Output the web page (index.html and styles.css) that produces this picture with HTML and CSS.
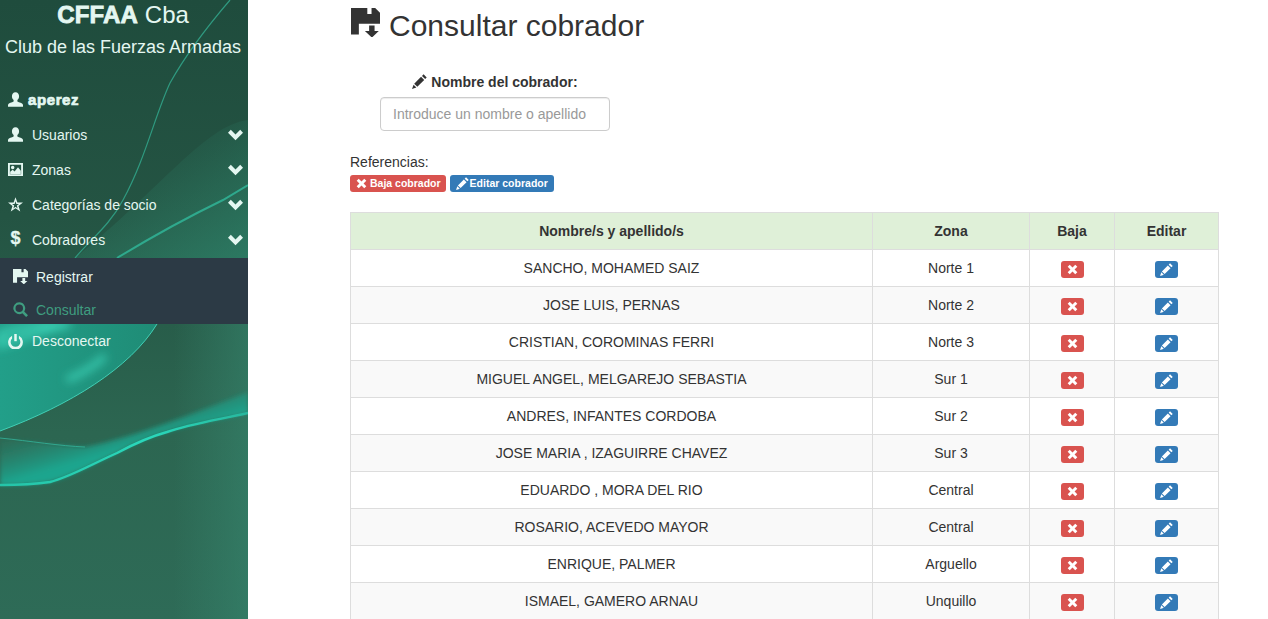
FILE: index.html
```html
<!DOCTYPE html>
<html lang="en">
<head>
  <meta charset="UTF-8" />
  <title>Consultar cobrador</title>
  <link rel="stylesheet" href="styles.css">
</head>
<body>
  <svg class="icon-defs" xmlns="http://www.w3.org/2000/svg">
    <symbol id="i-user" viewBox="0 0 24 24"><path d="M12 .5C8.300.5 6.300 3.300 6.300 6.800c0 2.600 1 4.700 2.700 6v2.400c-2.800 1.500-8 2.500-9 5v3.300h24v-3.300c-1-2.500-6.200-3.500-9-5v-2.400c1.700-1.300 2.700-3.400 2.700-6C17.700 3.300 15.700.5 12 .5z"/></symbol>
    <symbol id="i-picture" viewBox="0 0 24 24"><path fill-rule="evenodd" d="M0 1.500h24v21H0zM3 4.500v15h18v-15zM7.500 6a2.800 2.800 0 1 1 0 5.600 2.800 2.800 0 0 1 0-5.600zM3.500 19v-3.500l4-3 3 2.500 5.500-6.500 4.500 5.500V19z"/></symbol>
    <symbol id="i-star" viewBox="0 0 24 24"><path fill-rule="evenodd" d="M12 .5l3 8.300h9l-7.200 5.500 2.800 9L12 18l-7.600 5.300 2.800-9L0 8.800h9zM12 6.800l-1.400 4.400H6.500l3.400 2.500-1.300 4.500 3.400-2.500 3.400 2.500-1.300-4.500 3.400-2.500h-4.100z"/></symbol>
    <symbol id="i-chevron" viewBox="0 0 24 24"><path d="M0 9l4.500-4.500L12 12l7.500-7.500L24 9 12 21z"/></symbol>
    <symbol id="i-save" viewBox="0 0 24 24"><path d="M0 0h13.500v5H17V0h3l4 4v9H6.500v9H0z"/><path d="M15 14.500h4.500V19H23l-5.700 5.500L11.500 19H15z"/></symbol>
    <symbol id="i-search" viewBox="0 0 24 24"><path fill-rule="evenodd" d="M10 .5a9.500 9.500 0 0 1 8 14.600l6 6-3 3-6-6A9.500 9.500 0 1 1 10 .5zM10 4a6 6 0 1 0 0 12 6 6 0 0 0 0-12z"/></symbol>
    <symbol id="i-off" viewBox="0 0 24 24"><path d="M10 0h4v11.500h-4z"/><path d="M6.500 2.800v4.400a7.800 7.800 0 1 0 11 0V2.800a11.800 11.800 0 1 1-11 0z"/></symbol>
    <symbol id="i-pencil" viewBox="0 0 24 24"><path d="M18.500 .5l5 5-2.500 2.500-5-5zM14.500 4.500l5 5L8.500 20.500l-5-5zM2.500 17l4.500 4.500L0 24z"/></symbol>
    <symbol id="i-remove" viewBox="0 0 24 24"><path d="M6 1.500l6 6 6-6L22.500 6l-6 6 6 6-4.500 4.500-6-6-6 6L1.500 18l6-6-6-6z"/></symbol>
  </svg>

  <div class="layout">
    <aside class="sidebar">
      <svg class="sidebar-bg" viewBox="0 0 248 619" preserveAspectRatio="none" xmlns="http://www.w3.org/2000/svg">
        <defs>
          <linearGradient id="bg-base" x1="0" y1="0" x2="0" y2="1">
            <stop offset="0" stop-color="#1f4c3d"/>
            <stop offset="0.35" stop-color="#245443"/>
            <stop offset="0.7" stop-color="#2c6651"/>
            <stop offset="1" stop-color="#2e6b57"/>
          </linearGradient>
          <linearGradient id="bg-right" x1="0" y1="0" x2="1" y2="0">
            <stop offset="0.7" stop-color="#37876f" stop-opacity="0"/>
            <stop offset="1" stop-color="#37876f" stop-opacity="0.55"/>
          </linearGradient>
          <linearGradient id="bg-fold" gradientUnits="userSpaceOnUse" x1="150" y1="140" x2="235" y2="265">
            <stop offset="0" stop-color="#2f8a70" stop-opacity="0"/>
            <stop offset="1" stop-color="#2f8a70" stop-opacity="0.65"/>
          </linearGradient>
          <linearGradient id="bg-sheet" x1="0" y1="0" x2="1" y2="0">
            <stop offset="0" stop-color="#229f89"/>
            <stop offset="1" stop-color="#1f8c76"/>
          </linearGradient>
          <linearGradient id="bg-band" gradientUnits="userSpaceOnUse" x1="0" y1="485" x2="-12.600" y2="442">
            <stop offset="0" stop-color="#1fa58e"/>
            <stop offset="0.45" stop-color="#24917b" stop-opacity="0.7"/>
            <stop offset="1" stop-color="#2a7f69" stop-opacity="0.15"/>
          </linearGradient>
          <linearGradient id="bg-edge" x1="0" y1="0" x2="1" y2="0">
            <stop offset="0" stop-color="#25c4a8"/>
            <stop offset="0.6" stop-color="#2ad8bb"/>
            <stop offset="1" stop-color="#27b89e"/>
          </linearGradient>
          <filter id="soft" x="-20%" y="-20%" width="140%" height="140%"><feGaussianBlur stdDeviation="5"/></filter>
          <filter id="soft-band" x="-5%" y="-20%" width="110%" height="140%"><feGaussianBlur stdDeviation="2"/></filter>
        </defs>
        <rect width="248" height="619" fill="url(#bg-base)"/>
        <rect y="300" width="248" height="319" fill="url(#bg-right)"/>
        <path d="M248 120C205 125 160 190 75 258H248z" fill="url(#bg-fold)"/>
        <path d="M230 0C200 35 180 65 170 83C155 115 145 160 123 200C110 225 90 240 75 258" fill="none" stroke="#2f9a80" stroke-width="1.200"/>
        <path d="M248 185L223 200C190 216 150 238 117 258" fill="none" stroke="#2fa98d" stroke-width="2"/>
        <path d="M0 324H157C130 368 70 405 0 431z" fill="url(#bg-sheet)"/>
        <path d="M0 345C30 335 50 328 70 324H40C25 326 10 330 0 334zM67 380C85 372 95 366 105 356" fill="none" stroke="#3ad0b5" stroke-width="6" filter="url(#soft)"/>
        <path d="M0 431C70 405 130 368 157 324" fill="none" stroke="#41cfb5" stroke-width="1"/>
        <path d="M0 438C30 441 60 446 85 447C120 440 165 425 248 392V413C217 420 190 424 167 432C145 438 130 446 117 453C90 465 70 477 50 482C30 485 15 485 0 485z" fill="url(#bg-band)" filter="url(#soft-band)"/>
        <path d="M0 438C30 441 60 446 85 447" fill="none" stroke="#34b59c" stroke-width="0.800"/>
        <path d="M0 485C15 485 30 485 50 482C70 477 90 465 117 453C130 446 145 438 167 432C190 424 217 420 248 413" fill="none" stroke="url(#bg-edge)" stroke-width="2.400"/>
      </svg>

      <div class="brand">
        <div class="brand-title"><span class="heavy">CFFAA</span> Cba</div>
        <div class="brand-sub">Club de las Fuerzas Armadas</div>
      </div>

      <nav class="menu">
        <div class="menu-user"><svg class="ico"><use href="#i-user"/></svg><span class="heavy">aperez</span></div>
        <a class="menu-item"><svg class="ico"><use href="#i-user"/></svg><span>Usuarios</span><svg class="chev"><use href="#i-chevron"/></svg></a>
        <a class="menu-item"><svg class="ico"><use href="#i-picture"/></svg><span>Zonas</span><svg class="chev"><use href="#i-chevron"/></svg></a>
        <a class="menu-item"><svg class="ico"><use href="#i-star"/></svg><span>Categorías de socio</span><svg class="chev"><use href="#i-chevron"/></svg></a>
        <a class="menu-item"><b class="ico ico-usd">$</b><span>Cobradores</span><svg class="chev"><use href="#i-chevron"/></svg></a>
        <div class="submenu">
          <a class="sub-item"><svg class="ico"><use href="#i-save"/></svg><span>Registrar</span></a>
          <a class="sub-item active"><svg class="ico"><use href="#i-search"/></svg><span>Consultar</span></a>
        </div>
        <a class="menu-item menu-last"><svg class="ico"><use href="#i-off"/></svg><span>Desconectar</span></a>
      </nav>
    </aside>

    <main class="content">
      <h2 class="page-title"><svg class="title-ico"><use href="#i-save"/></svg>Consultar cobrador</h2>

      <div class="search-group">
        <label for="nombre"><svg class="label-ico"><use href="#i-pencil"/></svg> Nombre del cobrador:</label>
        <input type="text" id="nombre" placeholder="Introduce un nombre o apellido" />
      </div>

      <p class="refs-title">Referencias:</p>
      <div class="refs">
        <span class="tag tag-red"><svg class="tag-ico"><use href="#i-remove"/></svg> Baja cobrador</span>
        <span class="tag tag-blue"><svg class="tag-ico"><use href="#i-pencil"/></svg> Editar cobrador</span>
      </div>

      <table class="cobradores">
        <thead>
          <tr><th>Nombre/s y apellido/s</th><th>Zona</th><th>Baja</th><th>Editar</th></tr>
        </thead>
        <tbody>
          <tr><td>SANCHO, MOHAMED SAIZ</td><td>Norte 1</td><td><a class="btn-x btn-red"><svg><use href="#i-remove"/></svg></a></td><td><a class="btn-x btn-blue"><svg><use href="#i-pencil"/></svg></a></td></tr>
          <tr><td>JOSE LUIS, PERNAS</td><td>Norte 2</td><td><a class="btn-x btn-red"><svg><use href="#i-remove"/></svg></a></td><td><a class="btn-x btn-blue"><svg><use href="#i-pencil"/></svg></a></td></tr>
          <tr><td>CRISTIAN, COROMINAS FERRI</td><td>Norte 3</td><td><a class="btn-x btn-red"><svg><use href="#i-remove"/></svg></a></td><td><a class="btn-x btn-blue"><svg><use href="#i-pencil"/></svg></a></td></tr>
          <tr><td>MIGUEL ANGEL, MELGAREJO SEBASTIA</td><td>Sur 1</td><td><a class="btn-x btn-red"><svg><use href="#i-remove"/></svg></a></td><td><a class="btn-x btn-blue"><svg><use href="#i-pencil"/></svg></a></td></tr>
          <tr><td>ANDRES, INFANTES CORDOBA</td><td>Sur 2</td><td><a class="btn-x btn-red"><svg><use href="#i-remove"/></svg></a></td><td><a class="btn-x btn-blue"><svg><use href="#i-pencil"/></svg></a></td></tr>
          <tr><td>JOSE MARIA , IZAGUIRRE CHAVEZ</td><td>Sur 3</td><td><a class="btn-x btn-red"><svg><use href="#i-remove"/></svg></a></td><td><a class="btn-x btn-blue"><svg><use href="#i-pencil"/></svg></a></td></tr>
          <tr><td>EDUARDO , MORA DEL RIO</td><td>Central</td><td><a class="btn-x btn-red"><svg><use href="#i-remove"/></svg></a></td><td><a class="btn-x btn-blue"><svg><use href="#i-pencil"/></svg></a></td></tr>
          <tr><td>ROSARIO, ACEVEDO MAYOR</td><td>Central</td><td><a class="btn-x btn-red"><svg><use href="#i-remove"/></svg></a></td><td><a class="btn-x btn-blue"><svg><use href="#i-pencil"/></svg></a></td></tr>
          <tr><td>ENRIQUE, PALMER</td><td>Arguello</td><td><a class="btn-x btn-red"><svg><use href="#i-remove"/></svg></a></td><td><a class="btn-x btn-blue"><svg><use href="#i-pencil"/></svg></a></td></tr>
          <tr><td>ISMAEL, GAMERO ARNAU</td><td>Unquillo</td><td><a class="btn-x btn-red"><svg><use href="#i-remove"/></svg></a></td><td><a class="btn-x btn-blue"><svg><use href="#i-pencil"/></svg></a></td></tr>
        </tbody>
      </table>
    </main>
  </div>
</body>
</html>
```

FILE: styles.css
```css
* {
  box-sizing: border-box;
}
html, body {
  height: 100%;
}
body {
  margin: 0;
  overflow: hidden;
  font-family: "Liberation Sans", Arial, sans-serif;
  font-size: 14px;
  line-height: 20px;
  color: #333;
  background: #fff;
}
.icon-defs {
  display: none;
}
.layout {
  display: flex;
  height: 100vh;
}

/* sidebar */
.sidebar {
  position: relative;
  flex: 0 0 248px;
  overflow: hidden;
  color: #e4f7f1;
}
.sidebar-bg {
  position: absolute;
  top: 0;
  left: 0;
  width: 248px;
  height: 619px;
}
.brand, .menu {
  position: relative;
}
.brand {
  text-align: center;
  height: 82px;
  padding: 1px 2px 0 0;
}
.brand-title {
  font-size: 24px;
  line-height: 28px;
}
.brand-sub {
  font-size: 18px;
  line-height: 20px;
  margin-top: 8px;
}
.heavy {
  font-weight: bold;
  letter-spacing: 0.2px;
  -webkit-text-stroke: 0.8px currentColor;
}
.ico {
  width: 15px;
  height: 15px;
  fill: currentColor;
  flex: none;
}
.ico-usd {
  font-size: 18px;
  line-height: 15px;
  text-align: center;
  margin-top: -2px;
  -webkit-text-stroke: 0.3px currentColor;
}
.menu-user, .menu-item {
  display: flex;
  align-items: center;
  height: 35px;
  padding: 0 5px 0 8px;
}
.menu-user {
  gap: 5px;
}
.menu-user .heavy {
  font-size: 15px;
  letter-spacing: 0.6px;
  -webkit-text-stroke-width: 0.7px;
}
.menu-item {
  gap: 9px;
}
.menu-item span {
  flex: 1;
}
.chev {
  width: 15px;
  height: 15px;
  fill: currentColor;
  flex: none;
}
.submenu {
  background: #2c3a45;
  height: 66px;
  margin-top: 1px;
  padding-top: 2px;
}
.sub-item {
  display: flex;
  align-items: center;
  gap: 8px;
  height: 33px;
  padding-left: 13px;
}
.sub-item.active {
  color: #3f9d80;
}
.menu-last {
  height: 34px;
}

/* main area */
.content {
  flex: 1;
  padding: 0 49px 0 102px;
}
.page-title {
  display: flex;
  align-items: center;
  margin: 0;
  height: 51px;
  font-size: 30px;
  font-weight: normal;
  line-height: 33px;
}
.title-ico {
  width: 29px;
  height: 29px;
  fill: #333;
  margin: -7px 9px 0 1px;
}
.search-group {
  width: 290px;
  margin-top: 21px;
  text-align: center;
}
.search-group label {
  display: block;
  font-weight: bold;
  margin-bottom: 5px;
}
.label-ico {
  width: 15px;
  height: 15px;
  fill: #333;
  vertical-align: -2px;
}
.search-group input {
  display: block;
  width: 230px;
  height: 34px;
  margin: 0 auto;
  padding: 6px 12px;
  font: inherit;
  color: #555;
  border: 1px solid #ccc;
  border-radius: 4px;
  box-shadow: inset 0 1px 1px rgba(0, 0, 0, 0.075);
}
.search-group input::placeholder {
  color: #999;
  opacity: 1;
}
.refs-title {
  margin: 21px 0 0;
}
.refs {
  display: flex;
  gap: 4px;
  height: 17px;
  margin-top: 3px;
}
.tag {
  display: flex;
  align-items: center;
  gap: 3px;
  height: 17px;
  padding: 0 5px 0 6px;
  font-size: 10.5px;
  font-weight: bold;
  line-height: 17px;
  color: #fff;
  border-radius: 3px;
}
.tag-ico {
  width: 11px;
  height: 11px;
  fill: #fff;
}
.tag-blue .tag-ico {
  width: 13px;
  height: 13px;
}
.tag-blue {
  gap: 1px;
  padding-right: 6px;
}
.tag-red {
  background: #d9534f;
}
.tag-blue {
  background: #337ab7;
}

/* table */
.cobradores {
  width: 869px;
  margin-top: 20px;
  border-collapse: collapse;
  table-layout: fixed;
}
.cobradores th, .cobradores td {
  height: 37px;
  padding: 8px;
  text-align: center;
  vertical-align: middle;
  border: 1px solid #ddd;
}
.cobradores th {
  background: #dff0d8;
}
.cobradores th:nth-child(1) {
  width: 522px;
}
.cobradores th:nth-child(2) {
  width: 157px;
}
.cobradores th:nth-child(3) {
  width: 85px;
}
.cobradores tbody tr:nth-child(even) {
  background: #f9f9f9;
}
.btn-x {
  display: inline-flex;
  align-items: center;
  justify-content: center;
  width: 23px;
  height: 17px;
  border-radius: 3px;
  vertical-align: middle;
}
.btn-x svg {
  width: 11px;
  height: 11px;
  fill: #fff;
}
.btn-blue svg {
  width: 13px;
  height: 13px;
}
.btn-red {
  background: #d9534f;
}
.btn-blue {
  background: #337ab7;
}
```
